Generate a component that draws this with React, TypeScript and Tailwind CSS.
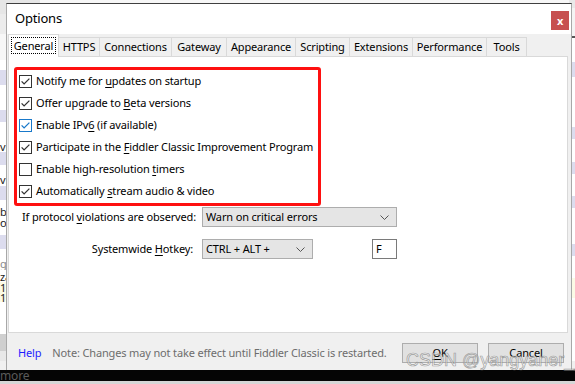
import React from "react";

function Check({ checked, blue }: { checked: boolean; blue?: boolean }) {
  const c = blue ? "#1979ca" : "#333333";
  return (
    <svg width="13" height="13" viewBox="0 0 13 13" className="shrink-0">
      <rect x="0.5" y="0.5" width="12" height="12" fill="#ffffff" stroke={c} />
      {checked && (
        <path d="M2.6 6.4 L5.1 8.9 L10.4 3.6" fill="none" stroke={c} strokeWidth="1.3" />
      )}
    </svg>
  );
}

function Chevron() {
  return (
    <svg width="9" height="5" viewBox="0 0 9 5" className="shrink-0">
      <path d="M0.5 0.5 L4.5 4.5 L8.5 0.5" fill="none" stroke="#555555" strokeWidth="1" />
    </svg>
  );
}

const K = ({ c }: { c: string }) => <span className="underline underline-offset-[2px] decoration-1">{c}</span>;

const rows: { pre: string; k: string; post: string; checked: boolean; blue?: boolean }[] = [
  { pre: "Notify me for ", k: "u", post: "pdates on startup", checked: true },
  { pre: "Offer upgrade to ", k: "B", post: "eta versions", checked: true },
  { pre: "Enable IPv", k: "6", post: " (if available)", checked: true, blue: true },
  { pre: "Participate in the ", k: "F", post: "iddler Classic Improvement Program", checked: true },
  { pre: "Enable high-resolution ", k: "t", post: "imers", checked: false },
  { pre: "Automatically ", k: "s", post: "tream audio & video", checked: true },
];

const tabs: { name: string; w: string }[] = [
  { name: "HTTPS", w: "w-[41px]" },
  { name: "Connections", w: "w-[72px]" },
  { name: "Gateway", w: "w-[55px]" },
  { name: "Appearance", w: "w-[69px]" },
  { name: "Scripting", w: "w-[54px]" },
  { name: "Extensions", w: "w-[63px]" },
  { name: "Performance", w: "w-[74px]" },
  { name: "Tools", w: "w-[40px]" },
];

const leftRows: { h: string; bg: string; t?: string; c?: string }[] = [
  { h: "h-[14px]", bg: "bg-[#e6e6e6]" },
  { h: "h-[20px]", bg: "bg-[#ececec]" },
  { h: "h-[26px]", bg: "bg-[#f7f7f7]" },
  { h: "h-[10px]", bg: "bg-[#ffffff]" },
  { h: "h-[15px]", bg: "bg-[#dcdcee]" },
  { h: "h-[25px]", bg: "bg-[#ffffff]" },
  { h: "h-[12px]", bg: "bg-[#dcdcee]" },
  { h: "h-[18px]", bg: "bg-[#ffffff]" },
  { h: "h-[12px]", bg: "bg-[#ffffff]", t: "vice", c: "text-[#222]" },
  { h: "h-[13px]", bg: "bg-[#dcdcee]" },
  { h: "h-[8px]", bg: "bg-[#ffffff]" },
  { h: "h-[13px]", bg: "bg-[#ffffff]", t: "vice", c: "text-[#222]" },
  { h: "h-[14px]", bg: "bg-[#dcdcee]" },
  { h: "h-[6px]", bg: "bg-[#ffffff]" },
  { h: "h-[11px]", bg: "bg-[#ffffff]", t: "bl", c: "text-[#222]" },
  { h: "h-[11px]", bg: "bg-[#ffffff]", t: "ol", c: "text-[#222]" },
  { h: "h-[7px]", bg: "bg-[#ffffff]" },
  { h: "h-[14px]", bg: "bg-[#dcdcee]" },
  { h: "h-[8px]", bg: "bg-[#ffffff]" },
  { h: "h-[13px]", bg: "bg-[#ffffff]", t: "g.", c: "text-[#888]" },
  { h: "h-[12px]", bg: "bg-[#ffffff]", t: "za", c: "text-[#222]" },
  { h: "h-[10px]", bg: "bg-[#fbfbe6]", t: "10", c: "text-[#222]" },
  { h: "h-[10px]", bg: "bg-[#fbfbe6]", t: "10", c: "text-[#222]" },
  { h: "h-[32px]", bg: "bg-[#ffffff]" },
  { h: "h-[17px]", bg: "bg-[#cfcfcf]" },
  { h: "h-[10px]", bg: "bg-[#e8e8e8]" },
];

const rightRows: { h: string; bg: string }[] = [
  { h: "h-[8px]", bg: "bg-[#e9e9e9]" },
  { h: "h-[28px]", bg: "bg-[#f4f4f4]" },
  { h: "h-[2px]", bg: "bg-[#555555]" },
  { h: "h-[12px]", bg: "bg-[#ffffff]" },
  { h: "h-[12px]", bg: "bg-[#ffffff]" },
  { h: "h-[15px]", bg: "bg-[#dcdcee]" },
  { h: "h-[8px]", bg: "bg-[#ffffff]" },
  { h: "h-[12px]", bg: "bg-[#ffffff]" },
  { h: "h-[18px]", bg: "bg-[#ffffff]" },
  { h: "h-[12px]", bg: "bg-[#ffffff]" },
  { h: "h-[12px]", bg: "bg-[#dcdcee]" },
  { h: "h-[23px]", bg: "bg-[#ffffff]" },
  { h: "h-[12px]", bg: "bg-[#dcdcee]" },
  { h: "h-[12px]", bg: "bg-[#ffffff]" },
  { h: "h-[10px]", bg: "bg-[#ffffff]" },
  { h: "h-[12px]", bg: "bg-[#dcdcee]" },
  { h: "h-[6px]", bg: "bg-[#ffffff]" },
  { h: "h-[12px]", bg: "bg-[#ffffff]" },
  { h: "h-[12px]", bg: "bg-[#ffffff]" },
  { h: "h-[6px]", bg: "bg-[#ffffff]" },
  { h: "h-[12px]", bg: "bg-[#dcdcee]" },
  { h: "h-[12px]", bg: "bg-[#ffffff]" },
  { h: "h-[10px]", bg: "bg-[#ffffff]" },
  { h: "h-[10px]", bg: "bg-[#fbfbe6]" },
  { h: "h-[10px]", bg: "bg-[#fbfbe6]" },
  { h: "h-[12px]", bg: "bg-[#ffffff]" },
  { h: "h-[12px]", bg: "bg-[#ffffff]" },
  { h: "h-[39px]", bg: "bg-[#ffffff]" },
];

export default function App() {
  return (
    <div className="relative w-[575px] h-[384px] overflow-hidden bg-[#f0f0f0] font-['Noto_Sans',sans-serif] text-[11px] tracking-[-0.15px] text-black">
      {/* background application */}
      <div className="flex flex-col w-full h-full">
        <div className="flex h-[370px]">
          <div className="flex flex-col w-[40px] overflow-hidden">
            {leftRows.map((r, i) => (
              <div key={i} className={`${r.h} ${r.bg} flex items-center whitespace-nowrap text-[11px] leading-none ${r.c ?? ""}`}>
                {r.t ?? ""}
              </div>
            ))}
          </div>
          <div className="flex-1 bg-[#f7f7f7]" />
          <div className="flex flex-col w-[6px] overflow-hidden">
            {rightRows.map((r, i) => (
              <div key={i} className={`${r.h} ${r.bg}`} />
            ))}
          </div>
        </div>
        <div className="h-[11px] bg-[#050505] flex items-center text-[12px] leading-none text-[#5a5a5a] pl-0">more</div>
        <div className="flex-1 bg-[#d6d6d6]" />
      </div>

      {/* dialog window */}
      <div className="absolute left-[6px] top-[3px] w-[566px] h-[367px] border border-[#a8a8a8] border-t-[#3f3f3f] border-b-0 flex flex-col bg-[#f0f0f0]">
        <div className="h-[30px] bg-white flex justify-between">
          <div className="pl-[8px] pt-[4px] text-[13px] tracking-[-0.2px] leading-[20px] text-black">Options</div>
          <div className="mt-[7px] mr-[2px] w-[18px] h-[19px] bg-[#c75050] flex items-center justify-center text-white text-[11px] font-bold leading-none">
            x
          </div>
        </div>

        {/* tab strip */}
        <div className="h-[22px] flex items-end pl-[1px] relative z-10">
          <div className="w-[51px] bg-white border border-[#d9d9d9] border-b-0 flex items-center justify-center mb-[-1px] h-[23px] pb-[2px]">
            <span className="border border-dotted border-black px-[2px] leading-[15px]">General</span>
          </div>
          {tabs.map((t) => (
            <div key={t.name} className={`${t.w} shrink-0 h-[19px] pb-[2px] bg-[#f0f0f0] border border-[#d9d9d9] border-l-0 border-b-0 flex items-center justify-center leading-none whitespace-nowrap`}>
              {t.name}
            </div>
          ))}
        </div>

        {/* panel */}
        <div className="ml-[1px] w-[560px] h-[277px] bg-white border border-[#d9d9d9] pt-[10px] pl-[5px]">
          <div className="w-[307px] h-[139px] border-[3px] border-[#fe1010] rounded-[3px] pl-[2px] flex flex-col">
            {rows.map((r, i) => (
              <div key={i} className="h-[22px] flex items-center gap-[4px] whitespace-nowrap">
                <Check checked={r.checked} blue={r.blue} />
                <span>
                  {r.pre}
                  <K c={r.k} />
                  {r.post}
                </span>
              </div>
            ))}
          </div>

          <div className="flex items-center h-[20px] mt-[1px]">
            <div className="w-[188px] text-right pr-[6px] whitespace-nowrap">
              If protocol <K c="v" />iolations are observed:
            </div>
            <div className="w-[195px] h-[20px] bg-[#e5e5e5] border border-[#adadad] flex items-center justify-between pl-[3px] pr-[7px]">
              <span>Warn on critical errors</span>
              <Chevron />
            </div>
          </div>

          <div className="flex items-center h-[20px] mt-[12px]">
            <div className="w-[188px] text-right pr-[9px] whitespace-nowrap">
              Systemwide <K c="H" />otkey:
            </div>
            <div className="w-[111px] h-[20px] bg-[#e5e5e5] border border-[#adadad] flex items-center justify-between pl-[3px] pr-[7px]">
              <span>CTRL + ALT +</span>
              <Chevron />
            </div>
            <div className="ml-[59px] w-[25px] h-[20px] bg-white border border-[#7a7a7a] flex items-center pl-[3px]">F</div>
          </div>
        </div>

        {/* bottom bar */}
        <div className="flex-1 flex items-start pt-[10px] pl-[11px] pr-[7px]">
          <div className="h-[20px] flex items-center text-[#1d1dff]">Help</div>
          <div className="h-[20px] flex items-center ml-[11px] text-[#6d6d6d] whitespace-nowrap">
            Note: Changes may not take effect until Fiddler Classic is restarted.
          </div>
          <div className="ml-auto flex gap-[10px]">
            <div className="w-[76px] h-[20px] bg-[#e1e1e1] border border-[#adadad] flex items-center justify-center">
              <span>
                <K c="O" />K
              </span>
            </div>
            <div className="w-[76px] h-[20px] bg-[#e1e1e1] border border-[#adadad] flex items-center justify-center">Cancel</div>
          </div>
        </div>
      </div>

      {/* watermark */}
      <div className="absolute left-[406px] top-[349px] text-[18px] leading-[22px] tracking-normal font-['Liberation_Sans',sans-serif] text-[rgba(255,255,255,0.5)] [-webkit-text-stroke:0.7px_rgba(120,120,120,0.7)] whitespace-nowrap pointer-events-none">
        CSDN @yangyaner__
      </div>
    </div>
  );
}
